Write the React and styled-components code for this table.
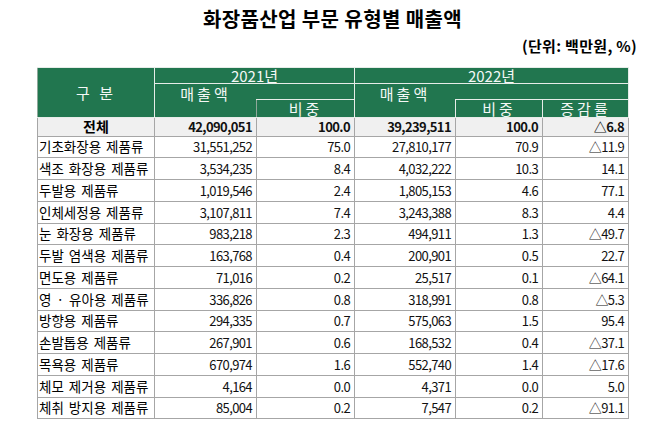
import React from "react";
import styled, { createGlobalStyle } from "styled-components";

const rows = [
  ["기초화장용 제품류", "31,551,252", "75.0", "27,810,177", "70.9", "△11.9"],
  ["색조 화장용 제품류", "3,534,235", "8.4", "4,032,222", "10.3", "14.1"],
  ["두발용 제품류", "1,019,546", "2.4", "1,805,153", "4.6", "77.1"],
  ["인체세정용 제품류", "3,107,811", "7.4", "3,243,388", "8.3", "4.4"],
  ["눈 화장용 제품류", "983,218", "2.3", "494,911", "1.3", "△49.7"],
  ["두발 염색용 제품류", "163,768", "0.4", "200,901", "0.5", "22.7"],
  ["면도용 제품류", "71,016", "0.2", "25,517", "0.1", "△64.1"],
  ["영 · 유아용 제품류", "336,826", "0.8", "318,991", "0.8", "△5.3"],
  ["방향용 제품류", "294,335", "0.7", "575,063", "1.5", "95.4"],
  ["손발톱용 제품류", "267,901", "0.6", "168,532", "0.4", "△37.1"],
  ["목욕용 제품류", "670,974", "1.6", "552,740", "1.4", "△17.6"],
  ["체모 제거용 제품류", "4,164", "0.0", "4,371", "0.0", "5.0"],
  ["체취 방지용 제품류", "85,004", "0.2", "7,547", "0.2", "△91.1"],
];

function App() {
  return (
    <Page>
      <GlobalStyle />
      <Title>화장품산업 부문 유형별 매출액</Title>
      <Unit>(단위: 백만원, %)</Unit>

      <Table>
        <colgroup>
          <col style={{ width: 117 }} />
          <col style={{ width: 102 }} />
          <col style={{ width: 98 }} />
          <col style={{ width: 101 }} />
          <col style={{ width: 87 }} />
          <col style={{ width: 86 }} />
        </colgroup>
        <thead>
          <HeadRow $h={16}>
            <Th rowSpan={3} $spaced>구 분</Th>
            <Th colSpan={2}>2021년</Th>
            <Th colSpan={3}>2022년</Th>
          </HeadRow>
          <HeadRow $h={16}>
            <Th rowSpan={2} $noRight $spaced $top>매출액</Th>
            <Th $noLeft $noRight />
            <Th rowSpan={2} $noRight $spaced $top>매출액</Th>
            <Th $noLeft $noRight />
            <Th $noLeft />
          </HeadRow>
          <HeadRow $h={18}>
            <Th $spaced>비중</Th>
            <Th $spaced>비중</Th>
            <Th $spaced>증감률</Th>
          </HeadRow>
        </thead>
        <tbody>
          <Row $total>
            <Label $total>전체</Label>
            <Num>42,090,051</Num>
            <Num>100.0</Num>
            <Num>39,239,511</Num>
            <Num>100.0</Num>
            <Num>△6.8</Num>
          </Row>
          {rows.map(([name, ...vals]) => (
            <Row key={name}>
              <Label>{name}</Label>
              {vals.map((v, i) => (
                <Num key={i}>{v}</Num>
              ))}
            </Row>
          ))}
        </tbody>
      </Table>
    </Page>
  );
}

export default App;

const GlobalStyle = createGlobalStyle`
  body {
    margin: 0;
    background: #fff;
    font-family: "Noto Sans CJK KR", "Noto Sans", sans-serif;
    color: #000;
  }
`;

const Page = styled.div`
  width: 665px;
  height: 428px;
  padding-top: 8px;
  box-sizing: border-box;
  overflow: hidden;
`;

const Title = styled.h1`
  margin: 0;
  text-align: center;
  font-size: 20px;
  line-height: 21px;
  font-weight: 700;
  letter-spacing: 0.4px;
`;

const Unit = styled.div`
  margin-top: 9px;
  padding-right: 28px;
  text-align: right;
  font-size: 15px;
  line-height: 16px;
  font-weight: 700;
  letter-spacing: 0.3px;
`;

const Table = styled.table`
  margin: 13px 0 0 37px;
  width: 591px;
  table-layout: fixed;
  border-collapse: collapse;
  font-size: 13px;
`;

const HeadRow = styled.tr`
  height: ${(p) => p.$h}px;
`;

const Th = styled.th`
  padding: 0;
  background: #21764f;
  color: #f4f8f6;
  font-weight: 400;
  font-size: 15px;
  line-height: 15px;
  text-align: center;
  vertical-align: ${(p) => (p.$top ? "top" : "middle")};
  padding-top: ${(p) => (p.$top ? "2px" : "0")};
  letter-spacing: ${(p) => (p.$spaced ? "3px" : "0")};
  border: 1px solid #e6ece8;
  border-right: ${(p) => (p.$noRight ? "none" : "1px solid #e6ece8")};
  border-left: ${(p) => (p.$noLeft ? "none" : "1px solid #e6ece8")};
  &:first-child {
    border-left: 1px solid #8fa89a;
  }
`;

const Row = styled.tr`
  height: ${(p) => (p.$total ? "18.5px" : "21.75px")};
  background: ${(p) => (p.$total ? "#f0f0f0" : "#fff")};
  font-weight: ${(p) => (p.$total ? 700 : 400)};
`;

const Cell = styled.td`
  border: 1px solid #a6a6a6;
  padding: 0;
  line-height: 15px;
  white-space: nowrap;
  overflow: hidden;
`;

const Label = styled(Cell)`
  text-align: ${(p) => (p.$total ? "center" : "left")};
  padding-left: ${(p) => (p.$total ? "0" : "1px")};
  font-size: ${(p) => (p.$total ? "14px" : "13.5px")};
  word-spacing: ${(p) => (p.$total ? "0" : "2px")};
`;

const Num = styled(Cell)`
  text-align: right;
  padding-right: 4px;
  letter-spacing: -0.6px;
  color: #111;
`;
